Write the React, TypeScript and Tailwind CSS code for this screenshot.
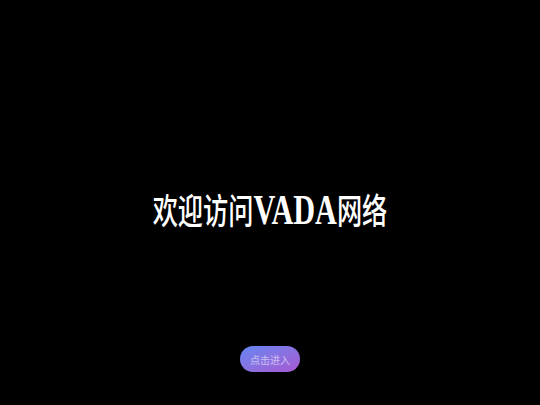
export default function App() {
  return (
    <div className="w-[540px] h-[405px] bg-black flex flex-col items-center overflow-hidden">
      <h1 className="mt-[189px] h-[40px] leading-[40px] text-white font-medium text-[35px] whitespace-nowrap scale-x-[0.72] font-['Liberation_Serif','Noto_Sans_CJK_SC',serif]">
        欢迎访问<span className="text-[42px] leading-none font-bold">VADA</span>网络
      </h1>
      <button className="mt-[117px] w-[60px] h-[26px] rounded-full bg-gradient-to-br from-[#5f86f2] to-[#a658d2] text-[10px] text-white/55 flex items-center justify-center font-['Noto_Sans_CJK_SC',sans-serif]">
        点击进入
      </button>
    </div>
  );
}
